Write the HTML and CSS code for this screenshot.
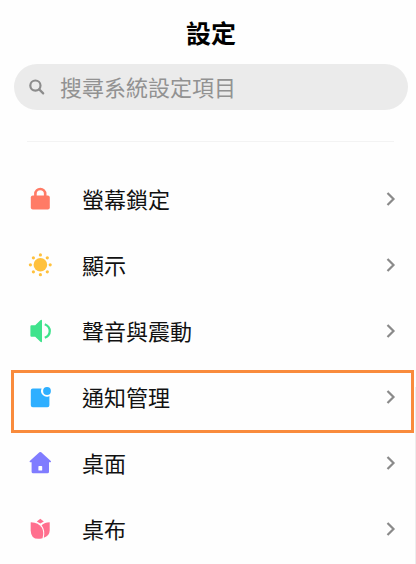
FILE: index.html
```
<!DOCTYPE html>
<html lang="zh-Hant">
<head>
    <meta charset="UTF-8">
    <title>設定</title>
    <link rel="stylesheet" href="styles.css">
</head>
<body>
    <div class="page">
        <h1 class="title">設定</h1>

        <div class="search">
            <svg class="search-icon" viewBox="0 0 18 18">
                <circle cx="7.4" cy="7.6" r="5.1"/>
                <path d="M11.2 11.4L15.2 15.4"/>
            </svg>
            <span class="search-text">搜尋系統設定項目</span>
        </div>

        <div class="divider"></div>

        <ul class="menu">
            <li class="item">
                <svg class="icon" viewBox="0 0 24 24">
                    <rect x="2.8" y="8.6" width="19" height="13.8" rx="2" fill="#ff7b66"/>
                    <path d="M7.4 9.5V6.9a4.9 4.9 0 0 1 9.8 0v2.6" fill="none" stroke="#ff7b66" stroke-width="2.6"/>
                </svg>
                <span class="label">螢幕鎖定</span>
                <svg class="arrow" viewBox="0 0 10 14"><path d="M1.5 1L7.5 7L1.5 13"/></svg>
            </li>
            <li class="item">
                <svg class="icon" viewBox="0 0 24 24" fill="#ffc13d">
                    <circle cx="12.4" cy="11.8" r="6.8"/>
                    <circle cx="12.4" cy="1.9" r="1.6"/>
                    <circle cx="12.4" cy="21.7" r="1.6"/>
                    <circle cx="2.4" cy="11.8" r="1.6"/>
                    <circle cx="22.2" cy="11.8" r="1.6"/>
                    <circle cx="5.4" cy="4.8" r="1.6"/>
                    <circle cx="19.3" cy="4.8" r="1.6"/>
                    <circle cx="5.4" cy="18.8" r="1.6"/>
                    <circle cx="19.3" cy="18.8" r="1.6"/>
                </svg>
                <span class="label">顯示</span>
                <svg class="arrow" viewBox="0 0 10 14"><path d="M1.5 1L7.5 7L1.5 13"/></svg>
            </li>
            <li class="item">
                <svg class="icon" viewBox="0 0 24 24">
                    <path d="M3.4 6.2H7.2L12.4 1.2Q14 .1 14 1.8V22.2Q14 23.9 12.4 22.8L7.2 17.8H3.4Q2.4 17.8 2.4 16.8V7.2Q2.4 6.2 3.4 6.2Z" fill="#3fe38c"/>
                    <path d="M16.8 5.2C23.4 8 23.4 16 16.8 18.8" fill="none" stroke="#3fe38c" stroke-width="2.3"/>
                </svg>
                <span class="label">聲音與震動</span>
                <svg class="arrow" viewBox="0 0 10 14"><path d="M1.5 1L7.5 7L1.5 13"/></svg>
            </li>
            <li class="item selected">
                <svg class="icon" viewBox="0 0 24 24" fill="#2eafff">
                    <path d="M4.8 3.6H13.6A5.6 5.6 0 0 0 21.4 10.9V20.2Q21.4 22.2 19.4 22.2H4.8Q2.8 22.2 2.8 20.2V5.6Q2.8 3.6 4.8 3.6Z"/>
                    <circle cx="19" cy="6" r="3.9"/>
                </svg>
                <span class="label">通知管理</span>
                <svg class="arrow" viewBox="0 0 10 14"><path d="M1.5 1L7.5 7L1.5 13"/></svg>
            </li>
            <li class="item">
                <svg class="icon" viewBox="0 0 24 24">
                    <path d="M11.4 1.3Q12.3.5 13.2 1.3L22.8 9.9Q23.6 11.2 22.2 11.2H21V20.7Q21 22.2 19.5 22.2H5.1Q3.6 22.2 3.6 20.7V11.2H2.4Q1 11.2 1.8 9.9Z" fill="#807cff"/>
                    <rect x="10.4" y="15" width="3.8" height="4.6" rx=".7" fill="#fff"/>
                </svg>
                <span class="label">桌面</span>
                <svg class="arrow" viewBox="0 0 10 14"><path d="M1.5 1L7.5 7L1.5 13"/></svg>
            </li>
            <li class="item">
                <svg class="icon" viewBox="0 0 24 24" fill="#ff6f8e">
                    <path d="M12.3 1.8L15.8 4.4L12.3 6.6L8.8 4.4Z"/>
                    <path d="M3 5.2Q10.6 5.3 13.9 10.8Q16.3 15.7 14.5 21.3Q3 24 2.7 13.4V5.5Q2.7 5.2 3 5.2Z"/>
                    <path d="M13.6 8.2Q16.6 5.2 21.7 5.2V13.4Q21.6 18.6 15.8 20.7Q17.5 13.3 13.6 8.2Z"/>
                </svg>
                <span class="label">桌布</span>
                <svg class="arrow" viewBox="0 0 10 14"><path d="M1.5 1L7.5 7L1.5 13"/></svg>
            </li>
        </ul>
        <div class="scrollbar"></div>
    </div>
</body>
</html>
```

FILE: styles.css
```
* {
    box-sizing: border-box;
}
body {
    margin: 0;
    background-color: #fefefe;
    color: #111;
    font-family: "Noto Sans CJK TC", sans-serif;
}
.page {
    position: relative;
    height: 564px;
    overflow: hidden;
}
.title {
    margin: 0;
    padding-left: 6px;
    height: 64px;
    line-height: 64px;
    font-size: 25px;
    font-weight: 700;
    color: #000;
    text-align: center;
}
.search {
    display: flex;
    align-items: center;
    height: 46px;
    margin: 0 8px 0 14px;
    padding-left: 14px;
    border-radius: 23px;
    background-color: #ebebeb;
    color: #929292;
    font-size: 22px;
}
.search-icon {
    width: 18px;
    height: 18px;
    margin-right: 14px;
    fill: none;
    stroke: #8c8c8c;
    stroke-width: 2.2;
    stroke-linecap: round;
}
.search-text {
    padding-bottom: 2px;
}
.divider {
    height: 1px;
    margin: 31px 22px 24px 27px;
    background-color: #f3f3f3;
}
.menu {
    margin: 0;
    padding: 0;
    list-style: none;
}
.item {
    position: relative;
    display: flex;
    align-items: center;
    height: 66px;
    padding: 0 20px 0 28px;
}
.icon {
    width: 24px;
    height: 24px;
}
.label {
    flex: 1;
    margin-left: 30px;
    padding-bottom: 2px;
    font-size: 22px;
    line-height: 32px;
}
.arrow {
    width: 10px;
    height: 14px;
    fill: none;
    stroke: #8a8a8a;
    stroke-width: 2.2;
}
/* frame around the current item */
.selected::after {
    content: "";
    position: absolute;
    box-sizing: border-box;
    top: 6px;
    right: 2px;
    left: 11px;
    height: 63px;
    border: 3px solid #f98b3c;
}
.scrollbar {
    position: absolute;
    top: 387px;
    right: 0;
    bottom: 0;
    width: 1px;
    background-color: #ededed;
}
```
